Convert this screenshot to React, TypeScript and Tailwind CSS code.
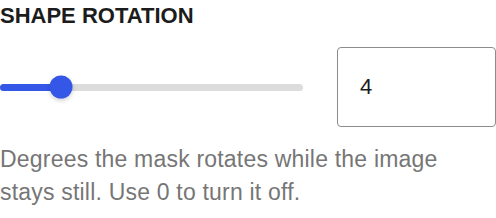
import { useState } from "react";

export default function App() {
  const [value, setValue] = useState(4);
  const max = 20;
  const pct = (value / max) * 100;

  return (
    <div className="w-[496px] h-[218px] bg-white font-['Liberation_Sans',Arial,sans-serif]">
      <h2 className="pt-[3px] text-[22px] leading-[26px] font-bold uppercase text-[#1c1c1c]">
        Shape Rotation
      </h2>
      <div className="mt-[18px] flex items-center gap-[34px]">
        <div className="relative h-[80px] w-[303px] flex items-center">
          <div className="h-[7px] w-full rounded-full bg-[#dcdcdc]">
            <div
              className="h-full rounded-full bg-[#3557e8]"
              style={{ width: `${pct}%` }}
            />
          </div>
          <div
            className="absolute top-1/2 -translate-x-1/2 -translate-y-1/2 w-[23px] h-[23px] rounded-full bg-[#3557e8] shadow-[0_2px_4px_rgba(0,0,0,0.18)]"
            style={{ left: `${pct}%` }}
          />
        </div>
        <input
          type="text"
          value={value}
          onChange={(e) => setValue(Number(e.target.value) || 0)}
          className="w-[159px] h-[80px] rounded-[4px] border-[1.5px] border-[#8c8c8c] pl-[22px] text-[22px] text-[#1c1c1c] outline-none"
        />
      </div>
      <p className="mt-[16px] text-[23px] tracking-[0.2px] leading-[33px] text-[#767676]">
        Degrees the mask rotates while the image stays still. Use 0 to turn it off.
      </p>
    </div>
  );
}
